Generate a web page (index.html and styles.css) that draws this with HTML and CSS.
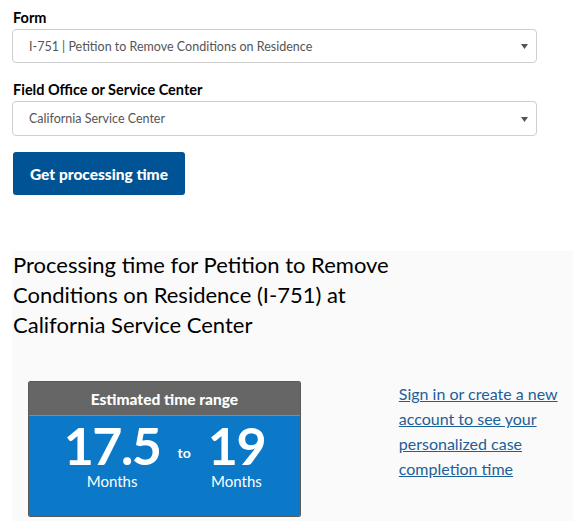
FILE: index.html
```html
<!DOCTYPE html>
<html>
<head>
<meta charset="utf-8">
<link rel="stylesheet" href="styles.css">
</head>
<body>
<div class="form">
  <div class="field">
    <div class="label">Form</div>
    <div class="select">
      <span>I-751 | Petition to Remove Conditions on Residence</span>
      <svg class="arrow" width="7" height="5" viewBox="0 0 7 5"><path d="M0 0H7L3.5 5Z" fill="#555"/></svg>
    </div>
  </div>
  <div class="field">
    <div class="label">Field Office or Service Center</div>
    <div class="select">
      <span>California Service Center</span>
      <svg class="arrow" width="7" height="5" viewBox="0 0 7 5"><path d="M0 0H7L3.5 5Z" fill="#555"/></svg>
    </div>
  </div>
  <button class="btn">Get processing time</button>
</div>
<section class="result">
  <h2 class="title">Processing time for Petition to Remove Conditions on Residence (I-751) at California Service Center</h2>
  <div class="row">
    <div class="card">
      <div class="card-head">Estimated time range</div>
      <div class="card-body">
        <div class="num"><span class="big">17.5</span><span class="unit">Months</span></div>
        <div class="to">to</div>
        <div class="num"><span class="big">19</span><span class="unit">Months</span></div>
      </div>
    </div>
    <a class="link" href="#">Sign in or create a new account to see your personalized case completion time</a>
  </div>
</section>
</body>
</html>
```
FILE: styles.css
```css
* { box-sizing: border-box; }
body {
  margin: 0;
  font-family: Lato, "Liberation Sans", sans-serif;
  color: #000;
  background: #fff;
}
.form {
  padding: 8px 36px 0 12px;
  display: flex;
  flex-direction: column;
}
.field { display: flex; flex-direction: column; margin-bottom: 17px; }
.field + .field { margin-bottom: 16px; }
.field + .field .select { height: 35px; }
.label {
  font-weight: bold;
  font-size: 14.5px;
  line-height: 20px;
  margin-left: 1px;
  margin-bottom: 1px;
}
.select {
  height: 34px;
  border: 1px solid #cfcfcf;
  border-radius: 4px;
  display: flex;
  align-items: center;
  justify-content: space-between;
  padding: 0 8px 0 16px;
  font-size: 12.5px;
  color: #555;
}
.arrow { margin-top: 1px; }
.btn {
  align-self: flex-start;
  margin-left: 1px;
  width: 172px;
  height: 43px;
  background: #005394;
  color: #fff;
  border: none;
  border-radius: 3px;
  font-family: inherit;
  font-weight: 900;
  font-size: 15.5px;
  padding: 0;
}
.result {
  margin: 56px 0 0 12px;
  background: #fafafa;
  padding: 0 0 20px 1px;
}
.title {
  margin: 0;
  font-weight: normal;
  font-size: 22px;
  line-height: 30px;
  width: 400px;
  position: relative;
  top: -1px;
}
.row {
  display: flex;
  align-items: flex-start;
  margin-top: 40px;
}
.card {
  margin-left: 15px;
  width: 274px;
  border: 1px solid #5a5a5a;
  border-radius: 2px;
  overflow: hidden;
}
.card-head {
  background: #666;
  color: #fff;
  font-weight: 900;
  font-size: 15.5px;
  height: 34px;
  display: flex;
  align-items: center;
  justify-content: center;
  border-bottom: 1px solid #8a8a8a;
}
.card-body {
  background: #0b78c8;
  color: #fff;
  height: 100px;
  display: flex;
  justify-content: center;
  padding-top: 3px;
  gap: 17px;
}
.num {
  display: flex;
  flex-direction: column;
  align-items: center;
}
.big {
  font-weight: bold;
  font-size: 52px;
  line-height: 52px;
  letter-spacing: -1.5px;
}
.unit {
  font-size: 15px;
  line-height: 16px;
  margin-top: 2px;
}
.to {
  font-weight: bold;
  font-size: 14px;
  line-height: 16px;
  margin-top: 26px;
}
.link {
  margin-left: 98px;
  width: 175px;
  font-size: 16px;
  line-height: 25px;
  color: #1d5f99;
  text-decoration: underline;
}
```
